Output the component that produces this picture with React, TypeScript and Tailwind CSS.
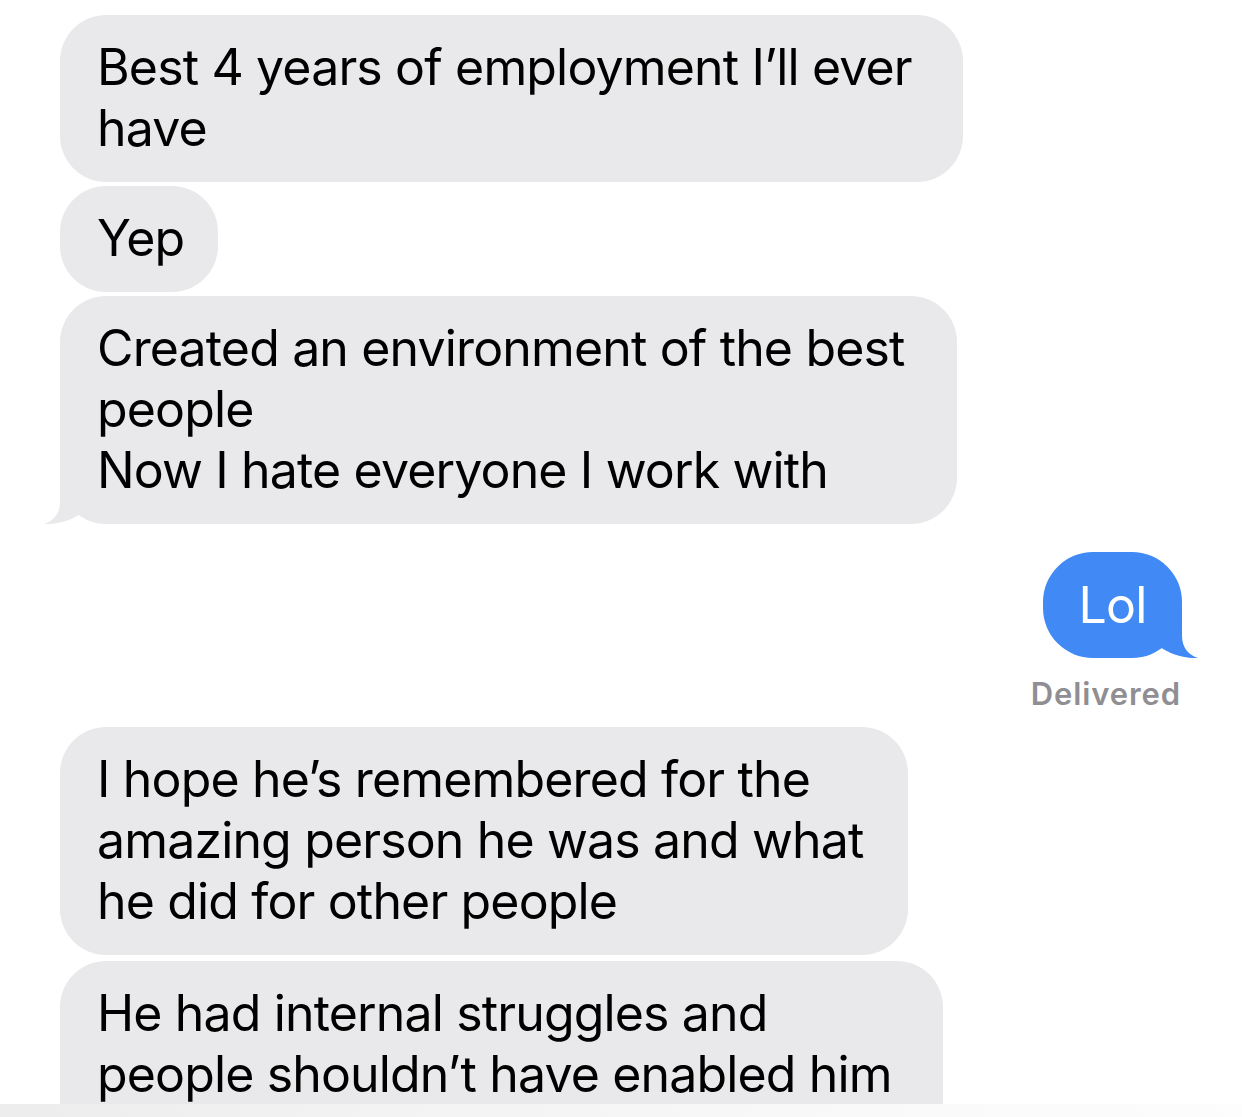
import { ReactNode } from "react";

const font = { fontFamily: '"Inter", "Liberation Sans", sans-serif' };

function GrayBubble({
  width,
  tail,
  className = "",
  children,
}: {
  width: string;
  tail?: boolean;
  className?: string;
  children: ReactNode;
}) {
  return (
    <div className={`relative ${width} ${className}`}>
      <div className="relative z-10 rounded-[46px] bg-[#e9e9eb] pt-[22px] pb-[23px] pl-[37px] text-[50px] leading-[61px] tracking-[-0.85px] text-black whitespace-nowrap">
        {children}
      </div>
      {/* tail */}
      {tail && (
        <svg
          className="absolute -left-[16px] bottom-0 z-0"
          width="80"
          height="50"
          viewBox="0 0 80 50"
        >
          <path
            d="M16 0 L16 28 C16 40 9 47 0 50 C14 50.5 28 46 38 39 C48 46 62 50 80 50 L80 0 Z"
            fill="#e9e9eb"
          />
        </svg>
      )}
    </div>
  );
}

export default function App() {
  return (
    <main
      className="relative w-[1242px] h-[1117px] overflow-hidden bg-white"
      style={font}
    >
      <div className="flex flex-col pt-[15px] pl-[60px] pr-[60px]">
        <GrayBubble width="w-[903px]">
          Best 4 years of employment I’ll ever
          <br />
          have
        </GrayBubble>

        <GrayBubble width="w-[158px]" className="mt-[4px]">
          Yep
        </GrayBubble>

        <GrayBubble width="w-[897px]" className="mt-[4px]" tail>
          Created an environment of the best
          <br />
          people
          <br />
          Now I hate everyone I work with
        </GrayBubble>

        {/* Sent message */}
        <div className="mt-[28px] flex flex-col items-end">
          <div className="relative">
            <div className="relative z-10 flex h-[106px] w-[139px] items-center justify-center rounded-[50px] bg-[#4189f4] text-[50px] tracking-[-0.85px] text-white">
              Lol
            </div>
            <svg
              className="absolute -right-[16px] bottom-0 z-0"
              width="80"
              height="50"
              viewBox="0 0 80 50"
            >
              <path
                d="M64 0 L64 28 C64 40 71 47 80 50 C66 50.5 52 46 42 39 C32 46 18 50 0 50 L0 0 Z"
                fill="#4189f4"
              />
            </svg>
          </div>
          <div className="mt-[16px] pr-[1px] text-[31px] font-semibold leading-[40px] tracking-[0.9px] text-[#8e8e93]">
            Delivered
          </div>
        </div>

        <GrayBubble width="w-[848px]" className="mt-[13px]">
          I hope he’s remembered for the
          <br />
          amazing person he was and what
          <br />
          he did for other people
        </GrayBubble>

        <GrayBubble width="w-[883px]" className="mt-[6px]">
          He had internal struggles and
          <br />
          people shouldn’t have enabled him
          <br />
          &nbsp;
        </GrayBubble>
      </div>

      {/* bottom fade bar */}
      <div className="absolute bottom-0 left-0 right-0 z-20 h-[13px] bg-gradient-to-r from-[#ededed] via-[#f6f6f6] to-[#fdfdfd]" />
    </main>
  );
}
